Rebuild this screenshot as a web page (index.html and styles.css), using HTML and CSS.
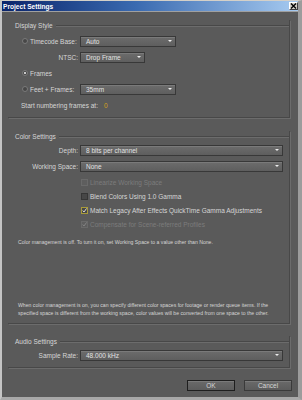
FILE: index.html
```html
<!DOCTYPE html>
<html lang="en">
<head>
    <meta charset="UTF-8">
    <meta name="viewport" content="width=device-width, initial-scale=1.0">
    <title>Project Settings</title>
    <link rel="stylesheet" href="styles.css">
</head>
<body>

<div class="window">
    <!-- Title bar -->
    <div class="titlebar">
        <span class="title">Project Settings</span>
        <span class="close">
            <svg width="7" height="6" viewBox="0 0 7 6"><path d="M1 0.5 L6 5.5 M6 0.5 L1 5.5" stroke="#000" stroke-width="1.4"/></svg>
        </span>
    </div>

    <div class="body">
        <!-- Display Style -->
        <section class="group group-display">
            <div class="group-head"><span>Display Style</span></div>

            <div class="row">
                <label class="lbl lbl-radio"><span class="radio"></span>Timecode Base:</label>
                <div class="select w-mid">Auto<i class="arrow"></i></div>
            </div>
            <div class="row">
                <label class="lbl">NTSC:</label>
                <div class="select w-short">Drop Frame<i class="arrow"></i></div>
            </div>
            <div class="row">
                <label class="lbl lbl-radio"><span class="radio on"></span>Frames</label>
            </div>
            <div class="row">
                <label class="lbl lbl-radio"><span class="radio"></span>Feet + Frames:</label>
                <div class="select w-mid">35mm<i class="arrow"></i></div>
            </div>
            <div class="row">
                <span class="start">Start numbering frames at:</span><span class="num">0</span>
            </div>
        </section>

        <!-- Color Settings -->
        <section class="group group-color">
            <div class="group-head"><span>Color Settings</span></div>

            <div class="row">
                <label class="lbl">Depth:</label>
                <div class="select w-full">8 bits per channel<i class="arrow"></i></div>
            </div>
            <div class="row">
                <label class="lbl">Working Space:</label>
                <div class="select w-full">None<i class="arrow"></i></div>
            </div>

            <div class="checks">
                <div class="check disabled"><span class="box"></span>Linearize Working Space</div>
                <div class="check"><span class="box"></span>Blend Colors Using 1.0 Gamma</div>
                <div class="check"><span class="box focus">
                    <svg width="7" height="7" viewBox="0 0 7 7"><path d="M1 3.5 L2.8 5.6 L6.4 0.6" fill="none" stroke="#f0f0f0" stroke-width="1.2"/></svg>
                </span>Match Legacy After Effects QuickTime Gamma Adjustments</div>
                <div class="check disabled"><span class="box">
                    <svg width="7" height="7" viewBox="0 0 7 7"><path d="M1 3.5 L2.8 5.6 L6.4 0.6" fill="none" stroke="#8a8a8a" stroke-width="1.2"/></svg>
                </span>Compensate for Scene-referred Profiles</div>
            </div>

            <p class="note">Color management is off. To turn it on, set Working Space to a value other than None.</p>
            <p class="note explain">When color management is on, you can specify different color spaces for footage or render queue items. If the<br>specified space is different from the working space, color values will be converted from one space to the other.</p>
        </section>

        <!-- Audio Settings -->
        <section class="group group-audio">
            <div class="group-head"><span>Audio Settings</span></div>

            <div class="row">
                <label class="lbl">Sample Rate:</label>
                <div class="select w-full">48.000 kHz<i class="arrow"></i></div>
            </div>
        </section>

        <div class="buttons">
            <button class="btn default">OK</button>
            <button class="btn">Cancel</button>
        </div>
    </div>
</div>

</body>
</html>
```

FILE: styles.css
```css
* { box-sizing: border-box; }
body { margin: 0; font-family: "Liberation Sans", Arial, sans-serif; font-size: 6.5px; color: #d6d6d6; }

.window { width: 302px; height: 400px; background: #5a5a5a; border-top: 1px solid #d4d0c8; border-left: 2px solid #c4c4c4; border-right: 4px solid #9c9c9c; border-bottom: 3px solid #a8a8a8; display: flex; flex-direction: column; }

.titlebar { height: 11px; flex: none; background: linear-gradient(90deg, #0a246a 0%, #3a6ab0 45%, #a6caf0 100%); border-bottom: 1px solid #a0a0a0; display: flex; align-items: center; justify-content: space-between; padding: 0 0 0 1px; }
.title { color: #fff; font-weight: bold; font-size: 6.6px; }
.close { width: 9px; height: 8px; background: #d4d0c8; border: 1px solid; border-color: #fff #404040 #404040 #fff; display: flex; align-items: center; justify-content: center; }

.body { flex: 1; padding: 8px 8px 0 6px; display: flex; flex-direction: column; }

.group { border-right: 1px solid #484848; border-bottom: 1px solid #484848; box-shadow: 1px 1px 0 #6c6c6c; padding-bottom: 6px; }
.group-head { height: 10px; display: flex; align-items: center; padding-left: 7px; }
.group-head span { padding-right: 3px; }
.group-head::after { content: ""; flex: 1; height: 1px; background: #484848; box-shadow: 0 1px 0 #6c6c6c; }

.row { height: 12px; display: flex; align-items: center; gap: 2px; padding-left: 14px; margin-top: 4px; }
.group .group-head + .row { margin-top: 5px; }
.group-color .group-head + .row, .group-audio .group-head + .row { margin-top: 3px; }

.lbl { width: 56px; flex: none; text-align: right; white-space: nowrap; }
.lbl-radio { text-align: left; display: flex; align-items: center; gap: 2px; }

.radio { width: 6px; height: 6px; border-radius: 50%; background: #474747; border: 1px solid #7a7a7a; display: inline-flex; align-items: center; justify-content: center; }
.radio.on::after { content: ""; width: 2px; height: 2px; border-radius: 50%; background: #f4f4f4; }

.select { height: 11px; position: relative; padding-left: 5px; line-height: 9px; color: #e2e2e2; background: linear-gradient(#6c6c6c, #5e5e5e); border: 1px solid #383838; box-shadow: inset 0 1px 0 #7a7a7a; }
.w-mid { width: 96px; }
.w-short { width: 65px; }
.w-full { width: 203px; }
.arrow { position: absolute; right: 3px; top: 3px; width: 0; height: 0; border-left: 2px solid transparent; border-right: 2px solid transparent; border-top: 2px solid #eee; }

.start { margin-left: -1px; }
.num { color: #d4a11a; margin-left: 4px; }

.group-color { margin-top: 13px; }
.checks { margin-top: 3px; padding-left: 73px; }
.check { height: 14px; display: flex; align-items: center; gap: 2px; }
.check.disabled { color: #7c7c7c; }
.box { width: 7px; height: 7px; flex: none; background: #474747; border: 1px solid #363636; display: inline-flex; align-items: center; justify-content: center; }
.check.disabled .box { background: #5e5e5e; border-color: #6a6a6a; }
.box.focus { border-color: #a89a3a; }
.box svg { display: block; }

.note { margin: 7px 0 0 10px; font-size: 5.15px; line-height: 8px; white-space: nowrap; }
.note.explain { margin-top: 56px; line-height: 7.5px; }

.group-audio { margin-top: 12px; }

.buttons { display: flex; justify-content: flex-end; gap: 9px; margin-top: 12px; padding-right: 0; margin-right: -2px; }
.btn { width: 48px; height: 11px; padding: 0; font: inherit; color: #d6d6d6; background: linear-gradient(#6a6a6a, #5c5c5c); border: 1px solid #3a3a3a; box-shadow: inset 0 1px 0 #7a7a7a; }
.btn.default { border-color: #1e1e1e; }
```
